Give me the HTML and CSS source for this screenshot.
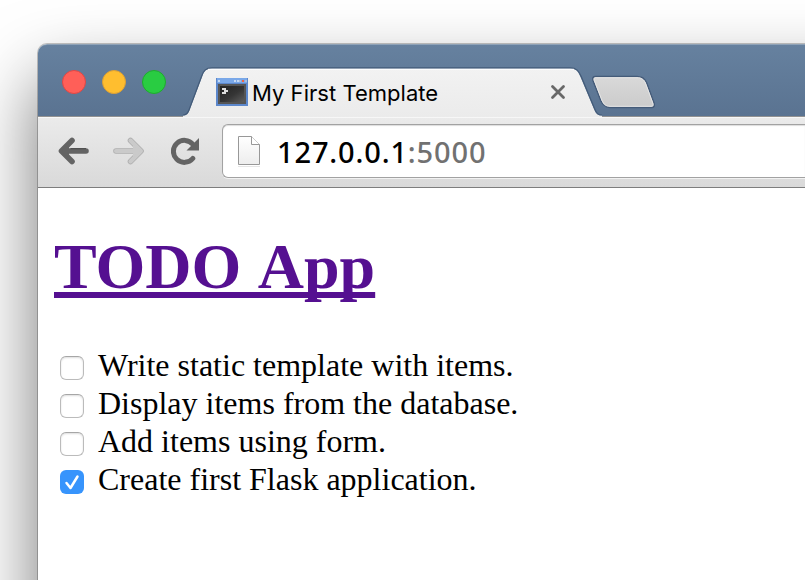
FILE: index.html
```html
<!DOCTYPE html>
<html lang="en">
<head>
<meta charset="utf-8">
<title>My First Template</title>
<link rel="stylesheet" href="styles.css">
</head>
<body>
<div class="window">
  <header class="titlebar">
    <div class="lights">
      <span class="light red"></span>
      <span class="light yellow"></span>
      <span class="light green"></span>
    </div>
    <div class="tab">
      <svg class="tab-shape" width="420" height="50" viewBox="0 0 420 50">
        <defs><linearGradient id="tabfill" x1="0" y1="0" x2="0" y2="1"><stop offset="0" stop-color="#f2f2f2"/><stop offset="1" stop-color="#ebebeb"/></linearGradient></defs>
        <path d="M0 50V48.500C3 48.500 5 47 6.500 43L19 10C21 4 23 1.500 29 1.500H387C393 1.500 395 4 397.500 10L411 42C413 47 415 48.500 419 48.500V50Z" fill="url(#tabfill)"/>
        <path d="M0 48C3 48 5 46.500 6.200 42.500L18.500 9.500C20.500 3.500 23 .8 29 .8H387C393.500 .8 396 4 398.200 9.500L411.500 41.500C413.500 46.500 415 48 419 48" fill="none" stroke="#435b79" stroke-width="1.200"/>
        <path d="M25 2.300H391" stroke="#fff" stroke-width="1"/>
      </svg>
      <div class="tab-content">
        <svg class="favicon" width="32" height="28" viewBox="0 0 32 28">
          <defs><linearGradient id="term" x1="0" y1="0" x2="1" y2="1"><stop offset="0" stop-color="#222"/><stop offset=".55" stop-color="#353535"/><stop offset="1" stop-color="#5c5c5c"/></linearGradient></defs>
          <path fill="#5c87cb" d="M0 0h32v28H0z"/>
          <path fill="#7aa8e8" d="M1 0h30v5H1z"/>
          <path fill="#c4d9f5" d="M2 2h2v2H2zM18 2h2v2h-2zM21 2h2v2h-2z"/>
          <path fill="#a9bddc" d="M23 2h2v2h-2zM29 2h2v2h-2z"/>
          <path fill="#f16546" d="M26 2h2v2h-2z"/>
          <path fill="#555" d="M2 6h28v20H2z"/>
          <path fill="url(#term)" d="M4 8h24v16H4z"/>
          <path fill="#ddd" d="M6 10h4v2h2v2h-2v2H6v-2h2v-2H6z"/>
        </svg>
        <span class="tab-title">My First Template</span>
        <svg class="close" width="16" height="16" viewBox="0 0 16 16"><path d="M2.500 2.500l11 11m0-11l-11 11" stroke="#686868" stroke-width="2.800" stroke-linecap="round"/></svg>
      </div>
    </div>
    <svg class="new-tab" width="66" height="34" viewBox="0 0 66 34">
      <defs><linearGradient id="newfill" x1="0" y1="0" x2="0" y2="1"><stop offset="0" stop-color="#d9d9d9"/><stop offset="1" stop-color="#cbcbcb"/></linearGradient></defs>
      <path d="M4.500 1.500H46C51 1.500 53.500 3 55.500 7.500L63 28C64 31 63 32.500 60.500 32.500H19C14 32.500 12 30.500 10 26L2 5.500C1.300 3 2 1.500 4.500 1.500Z" fill="url(#newfill)" stroke="#445b79" stroke-width="1.500"/>
      <path d="M5 2.700H46C50 2.700 52.500 4 54.400 8L61.800 28C62.500 30.500 62 31.300 60 31.300H19C15 31.300 13 29.500 11 25.500L3.300 5.500C2.800 3.500 3 2.700 5 2.700" fill="none" stroke="#e6e6e6"/>
    </svg>
  </header>
  <nav class="toolbar">
    <svg class="nav-icon" width="32" height="28" viewBox="0 0 32 28"><path d="M29 14H8M15 3.500L4.500 14 15 24.500" fill="none" stroke="#646464" stroke-width="5.600" stroke-linecap="round" stroke-linejoin="round"/><path d="M4 14l8-7v14z" fill="#646464"/><path d="M13.500 11.700H29" stroke="#454545"/></svg>
    <svg class="nav-icon forward" width="32" height="28" viewBox="0 0 32 28"><g fill="none" stroke-linecap="round" stroke-linejoin="round"><path d="M3 14h21M17.500 3.500L28 14 17.500 24.500" stroke="#afafaf" stroke-width="5.600"/><path d="M3 14h21M17.500 3.500L28 14 17.500 24.500" stroke="#cacaca" stroke-width="4"/></g><path d="M28 14l-8-6v12z" fill="#cacaca"/></svg>
    <svg class="reload" width="28" height="28" viewBox="0 0 28 28"><path d="M21.800 21.500A11 11 0 1 1 22 7.500" fill="none" stroke="#646464" stroke-width="5" stroke-linecap="round"/><path d="M28 1v12.500H15.500z" fill="#646464"/></svg>
    <div class="address">
      <svg class="page-icon" width="24" height="32" viewBox="0 0 24 32">
        <defs><linearGradient id="paper" x1="0" y1="0" x2="0" y2="1"><stop offset="0" stop-color="#fff"/><stop offset="1" stop-color="#ededed"/></linearGradient></defs>
        <path d="M1 31.500h22" stroke="#e5e5e5"/>
        <path d="M1.500 1.500h13l8 8v20h-21z" fill="url(#paper)" stroke="#989898"/><path d="M14.500 1.500v8h8" fill="#fff" stroke="#989898"/>
      </svg>
      <span class="host">127.0.0.1<span class="port">:5000</span></span>
    </div>
  </nav>
  <main class="page">
    <h1 class="heading"><a href="#" class="heading-link">TODO App</a></h1>
    <div class="items">
      <label class="item"><span class="box"></span><span class="text">Write static template with items.</span></label>
      <label class="item"><span class="box"></span><span class="text">Display items from the database.</span></label>
      <label class="item"><span class="box"></span><span class="text">Add items using form.</span></label>
      <label class="item"><span class="box checked"><svg width="24" height="24" viewBox="0 0 24 24"><path d="M6.500 13l4 5L17.500 6.500" fill="none" stroke="#fff" stroke-width="2.500" stroke-linecap="round" stroke-linejoin="round"/></svg></span><span class="text">Create first Flask application.</span></label>
    </div>
  </main>
</div>
</body>
</html>
```
FILE: styles.css
```css
* { box-sizing: border-box; }
html, body { height: 100%; overflow: hidden; }
body { margin: 0; background: #fff; padding: 44px 0 0 38px; }
svg { display: block; flex: none; }
.window {
  position: relative; z-index: 0;
  height: 100%; background: #fff;
  border-radius: 9px 0 0 0;
}
/* The shadow continues past the right and bottom of the viewport. */
.window::before {
  content: ""; position: absolute; z-index: -1; inset: 0 -240px -360px 0;
  border-radius: 9px; background: #fff;
  box-shadow: 0 0 0 1px rgba(0,0,0,.22), 0 36px 72px rgba(0,0,0,.55);
}
.titlebar {
  height: 72px; display: flex; align-items: flex-end;
  border-radius: 9px 0 0 0;
  background: linear-gradient(#66819f, #5a7391);
  border-top: 1px solid #8fa3b8;
}
.lights { display: flex; gap: 16px; width: 145px; padding-left: 24px; margin-bottom: 22px; flex: none; }
.light { width: 24px; height: 24px; border-radius: 50%; border: 1px solid; }
.red { background: #ff5f58; border-color: #df4744; }
.yellow { background: #ffbe2f; border-color: #dea033; }
.green { background: #29cc42; border-color: #1fab2e; }
.tab { display: grid; width: 420px; height: 50px; margin-bottom: -1px; flex: none; z-index: 1; }
.tab-shape, .tab-content { grid-area: 1 / 1; }
.tab-content { display: flex; align-items: center; padding: 0 37px 0 33px; height: 50px; z-index: 1; }
.tab-title { font: 22px/30px Inter, "Noto Sans", sans-serif; letter-spacing: .03px; margin: 1px 0 0 4px; flex: 1; color: #000; white-space: nowrap; }
.new-tab { margin: 0 0 7px -12px; }
.toolbar {
  height: 72px; display: flex; align-items: center;
  padding: 0 0 2px 19px;
  background: linear-gradient(#ebebeb, #d9d9d9);
  border-top: 1px solid #929292; border-bottom: 1px solid #7d7d7d;
  box-shadow: inset 0 1px #f7f7f7;
}
.forward { margin-left: 24px; }
.reload { margin-left: 26px; }
.address {
  flex: 1; height: 54px; margin-left: 23px; display: flex; align-items: center;
  background: #fff; border: 1px solid #a2a2a2; border-radius: 6px 0 0 6px;
  border-right: 0; padding-left: 14px;
  box-shadow: 0 1px #f2f2f2, inset 0 1px 1px #ddd;
}
.host { font: 500 29px/40px "Noto Sans", sans-serif; letter-spacing: .85px; margin: 1px 0 0 16px; color: #000; white-space: nowrap; }
.port { color: #717171; }
.page { padding: 42px 16px 0; font-family: "Liberation Serif", serif; color: #000; }
.heading { margin: 0; font-size: 64px; line-height: 73px; height: 117px; }
.heading-link { color: #551091; word-spacing: 4px; text-decoration: underline; text-decoration-thickness: 6px; text-underline-offset: 4px; text-decoration-skip-ink: none; }
.items { display: grid; font-size: 32px; }
.item { display: flex; align-items: center; height: 38px; gap: 14px; padding-left: 6px; white-space: nowrap; }
.text { margin-top: -1px; }
.box { width: 24px; height: 24px; flex: none; margin-top: 4px; border: 1px solid #bbb; border-top-color: #a6a6a6; border-radius: 6px; background: #fff; box-shadow: inset 0 1px 2px #ddd; }
.checked { background: #3794fc; border: 0; box-shadow: none; }
```
